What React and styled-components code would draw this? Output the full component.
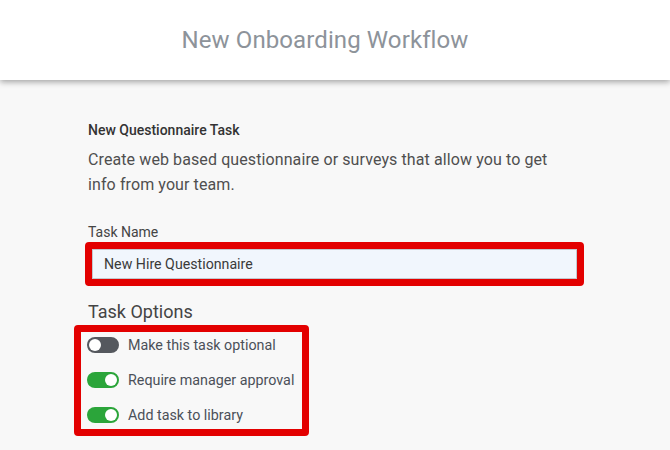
import React, { useState } from 'react';
import styled, { createGlobalStyle } from 'styled-components';

const GlobalStyle = createGlobalStyle`
    body {
        margin: 0;
        background: #f8f8f8;
        font-family: Roboto, "Liberation Sans", sans-serif;
    }
`;

const Header = styled.header`
    height: 80px;
    background: #fff;
    box-shadow: 0 2px 6px rgba(0, 0, 0, 0.35);
    display: flex;
    align-items: center;
    justify-content: center;
    padding-right: 20px;
    position: relative;

    h1 {
        margin: 0;
        font-size: 24px;
        font-weight: 400;
        letter-spacing: 0.1px;
        color: #8d939a;
    }
`;

const Content = styled.main`
    padding: 40px 0 0 88px;
    width: 480px;
`;

const TaskTitle = styled.h2`
    margin: 0;
    font-size: 14px;
    line-height: 20px;
    font-weight: 500;
    color: #333;
`;

const Description = styled.p`
    margin: 7px 0 0;
    font-size: 16px;
    line-height: 25px;
    letter-spacing: 0.1px;
    color: #4f4f4f;
`;

const FieldLabel = styled.label`
    display: block;
    margin-top: 25px;
    font-size: 14px;
    line-height: 20px;
    color: #444;
`;

const Highlight = styled.div`
    border: 7px solid #e30000;
    border-radius: 4px;
    box-sizing: border-box;
    margin-left: ${p => p.$offset}px;
    width: ${p => p.$width}px;
    margin-top: ${p => p.$top}px;
`;

const NameInput = styled.input`
    display: block;
    box-sizing: border-box;
    width: 100%;
    height: 30px;
    border: 1px solid #c3c8cf;
    background: #f1f6fd;
    padding: 0 11px;
    font-family: inherit;
    font-size: 14.2px;
    color: #3a3a3a;
    outline: none;
`;

const SectionTitle = styled.h3`
    margin: 14px 0 0;
    font-size: 18px;
    line-height: 24px;
    font-weight: 400;
    color: #444;
`;

const OptionList = styled.div`
    display: flex;
    flex-direction: column;
    gap: 9px;
    padding: 0 6px 1px;
`;

const OptionRow = styled.label`
    display: flex;
    align-items: center;
    gap: 9px;
    height: 26px;
    font-size: 14.3px;
    color: #4b5058;
    white-space: nowrap;
    cursor: pointer;
`;

const Switch = styled.span`
    position: relative;
    width: 32px;
    height: 16px;
    border-radius: 8px;
    background: ${p => (p.$on ? '#2ba53a' : '#55585e')};
    flex-shrink: 0;

    &::after {
        content: '';
        position: absolute;
        top: 2px;
        left: ${p => (p.$on ? '18px' : '2px')};
        width: 12px;
        height: 12px;
        border-radius: 50%;
        background: #fff;
    }
`;

const options = [
    { id: 1, label: 'Make this task optional', on: false },
    { id: 2, label: 'Require manager approval', on: true },
    { id: 3, label: 'Add task to library', on: true },
];

const App = () => {
    const [name, setName] = useState('New Hire Questionnaire');
    const [checked, setChecked] = useState(options.filter(o => o.on).map(o => o.id));

    const toggle = (id) => {
        if (checked.includes(id)) {
            setChecked(checked.filter(el => el !== id));
        } else {
            setChecked([...checked, id]);
        }
    };

    return (
        <>
            <GlobalStyle />
            <Header>
                <h1>New Onboarding Workflow</h1>
            </Header>
            <Content>
                <TaskTitle>New Questionnaire Task</TaskTitle>
                <Description>
                    Create web based questionnaire or surveys that allow you to get info from your team.
                </Description>
                <FieldLabel htmlFor="taskName">Task Name</FieldLabel>
                <Highlight $offset={-3} $width={499} $top={0}>
                    <NameInput id="taskName" value={name} onChange={e => setName(e.target.value)} />
                </Highlight>
                <SectionTitle>Task Options</SectionTitle>
                <Highlight $offset={-14} $width={235} $top={1}>
                    <OptionList>
                        {options.map(o => (
                            <OptionRow key={o.id} onClick={() => toggle(o.id)}>
                                <Switch $on={checked.includes(o.id)} />
                                {o.label}
                            </OptionRow>
                        ))}
                    </OptionList>
                </Highlight>
            </Content>
        </>
    );
};

export default App;
